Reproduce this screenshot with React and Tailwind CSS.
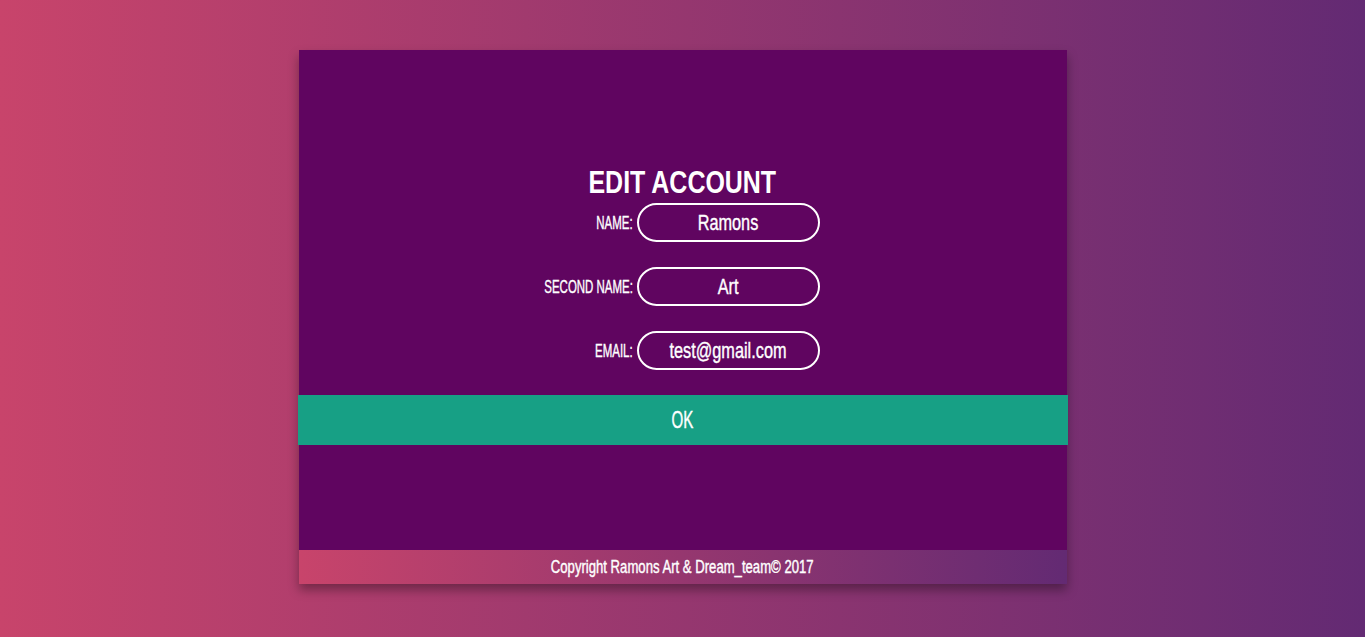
export default function App() {
  const font = { fontFamily: '"Liberation Sans", Arial, sans-serif' };
  const rows = [
    ["NAME:", "Ramons"],
    ["SECOND NAME:", "Art"],
    ["EMAIL:", "test@gmail.com"],
  ];
  return (
    <div
      className="w-full h-[637px] bg-[linear-gradient(to_right,#c8446b,#632a73)] pt-[50px] text-white"
      style={font}
    >
      <div className="mx-auto w-[768px] h-[534px] bg-[#600560] flex flex-col shadow-[0_6px_10px_rgba(0,0,0,0.35)]">
        <div className="h-[345px] pt-[112px]">
          <h1 className="flex justify-center text-[32px] leading-[41px] font-bold text-white">
            <span className="inline-block whitespace-nowrap scale-x-[0.78]">EDIT ACCOUNT</span>
          </h1>
          <div className="flex flex-col gap-[25px] pl-[238px]">
            {rows.map(([label, value]) => (
              <div key={label} className="flex items-center">
                <div className="w-[100px] pr-[4px] flex justify-end">
                  <span className="inline-block shrink-0 whitespace-nowrap origin-right scale-x-[0.62] text-[18.5px] leading-[22px] [-webkit-text-stroke:0.4px_white]">
                    {label}
                  </span>
                </div>
                <div className="w-[183px] h-[39px] rounded-full border-2 border-white flex items-center justify-center">
                  <span className="inline-block shrink-0 whitespace-nowrap scale-x-[0.74] text-[22px] leading-[26px] [-webkit-text-stroke:0.4px_white]">
                    {value}
                  </span>
                </div>
              </div>
            ))}
          </div>
        </div>
        <div className="-mx-px h-[50px] bg-[#17a085] flex items-center justify-center">
          <span className="inline-block scale-x-[0.63] text-[24px] leading-[28px] [-webkit-text-stroke:0.4px_white]">OK</span>
        </div>
        <div className="flex-1" />
        <div className="h-[34px] bg-[linear-gradient(to_right,#c8446b,#632a73)] flex items-center justify-center">
          <span className="inline-block shrink-0 whitespace-nowrap scale-x-[0.75] text-[17.5px] leading-[22px] [-webkit-text-stroke:0.4px_white]">
            Copyright Ramons Art &amp; Dream_team© 2017
          </span>
        </div>
      </div>
    </div>
  );
}
